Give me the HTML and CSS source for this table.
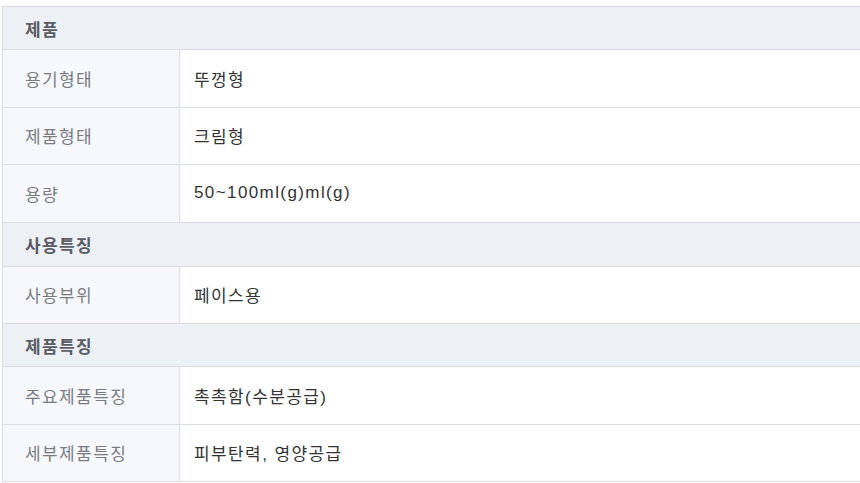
FILE: index.html
```html
<!DOCTYPE html>
<html lang="ko">
<head>
<meta charset="utf-8">
<link rel="stylesheet" href="styles.css">
</head>
<body>
<div class="spec">
  <div class="sec">제품</div>
  <div class="row"><div class="lbl">용기형태</div><div class="val">뚜껑형</div></div>
  <div class="row"><div class="lbl">제품형태</div><div class="val">크림형</div></div>
  <div class="row"><div class="lbl">용량</div><div class="val">50~100ml(g)ml(g)</div></div>
  <div class="sec sec-tall">사용특징</div>
  <div class="row"><div class="lbl">사용부위</div><div class="val">페이스용</div></div>
  <div class="sec">제품특징</div>
  <div class="row"><div class="lbl">주요제품특징</div><div class="val">촉촉함(수분공급)</div></div>
  <div class="row"><div class="lbl">세부제품특징</div><div class="val">피부탄력, 영양공급</div></div>
</div>
</body>
</html>
```
FILE: styles.css
```css
html, body {
  margin: 0;
  padding: 0;
  background: #ffffff;
}
body {
  padding: 6px 0 0 2px;
  font-family: "Liberation Sans", "Noto Sans CJK KR", sans-serif;
  font-size: 17px;
  letter-spacing: 1.4px;
}
.spec {
  width: 870px;
  border-top: 1px solid #dcdde3;
  border-left: 1px solid #dcdde3;
}
.sec {
  height: 42px;
  display: flex;
  align-items: center;
  padding-left: 22px;
  background: #edf0f5;
  border-bottom: 1px solid #dcdde3;
  color: #5a5d64;
  font-weight: 600;
}
.sec-tall {
  height: 43px;
}
.row {
  display: flex;
  height: 56.5px;
  border-bottom: 1px solid #dcdde3;
}
.lbl {
  width: 154px;
  flex: none;
  display: flex;
  align-items: center;
  padding-left: 22px;
  background: #f7f8fc;
  border-right: 1px solid #dcdde3;
  color: #7a7c82;
}
.val {
  flex: 1;
  display: flex;
  align-items: center;
  padding-left: 14px;
  color: #333333;
}
```
